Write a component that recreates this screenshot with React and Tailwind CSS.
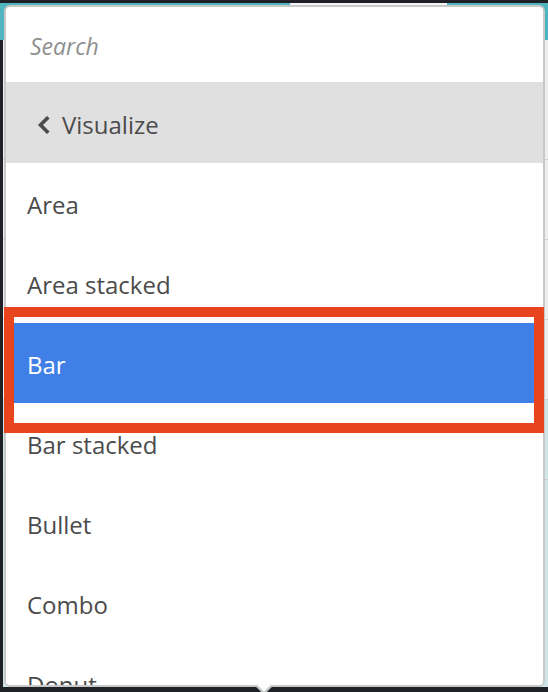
import React from 'react';

const items = ['Area', 'Area stacked', 'Bar', 'Bar stacked', 'Bullet', 'Combo', 'Donut'];

const ChevronLeft = () => (
  <svg width="13" height="18" viewBox="0 0 13 18" className="shrink-0">
    <path d="M10 2.5 L3.5 9 L10 15.5" fill="none" stroke="#4b4b4b" strokeWidth="3.6" strokeLinecap="square" />
  </svg>
);

const MenuItem = ({ label, active }) => (
  <div
    className={`h-[80px] shrink-0 flex items-center pl-[21px] pt-[4px] text-[24px] ${
      active ? 'bg-[#4080e6] text-white' : 'bg-white text-[#4b4b4b]'
    }`}
  >
    {label}
  </div>
);

export default function App() {
  return (
    <div
      className="relative w-[548px] h-[692px] overflow-hidden bg-[#1e2226]"
      style={{ fontFamily: '"Open Sans", "Noto Sans", sans-serif' }}
    >
      {/* backdrop page */}
      <div className="flex flex-col h-full pt-[3px] pb-[5px]">
        <div className="flex h-[37px]">
          <div className="w-[290px] bg-[#4fb5bf]" />
          <div className="w-[157px] bg-[#f4f4f4]" />
          <div className="flex-1 bg-[#4fb5bf]" />
        </div>
        <div className="flex-1 flex">
          <div className="w-[3px] bg-[#1e2226]" />
          <div className="flex-1 bg-[#eeeeee] flex flex-col">
            <div className="h-[120px] border-b border-[#d0d0d0]" />
            <div className="h-[80px] border-b border-[#d0d0d0]" />
            <div className="h-[80px] border-b border-[#d0d0d0]" />
            <div className="h-[80px] border-b border-[#d0d0d0]" />
            <div className="h-[80px] bg-[#cfe7e9] border-b border-[#d0d0d0]" />
            <div className="flex-1 bg-[#cfe7e9]" />
          </div>
        </div>
      </div>

      {/* popover */}
      <div className="absolute left-[4px] top-[5px] w-[541px] h-[682px] rounded-[6px] border-2 border-[#c8c8c8] bg-white">
        <div className="h-full overflow-hidden rounded-[4px] flex flex-col">
          <div className="h-[75px] shrink-0 flex items-center pl-[24px] pt-[4px] text-[23px] italic text-[#8f8f8f]">
            Search
          </div>
          <div className="h-[81px] shrink-0 flex items-center gap-[12px] pl-[31px] pt-[4px] bg-[#e0e0e0] text-[24px] text-[#4b4b4b]">
            <ChevronLeft />
            <span>Visualize</span>
          </div>
          {items.map((label) => (
            <MenuItem key={label} label={label} active={label === 'Bar'} />
          ))}
        </div>
        <div className="absolute left-[252px] bottom-[-7px] w-[12px] h-[12px] rotate-45 bg-white border-r-2 border-b-2 border-[#c8c8c8]" />
      </div>

      {/* annotation box */}
      <div className="absolute left-[4px] top-[307px] w-[540px] h-[126px] border-[10px] border-[#e8441e]" />
    </div>
  );
}
